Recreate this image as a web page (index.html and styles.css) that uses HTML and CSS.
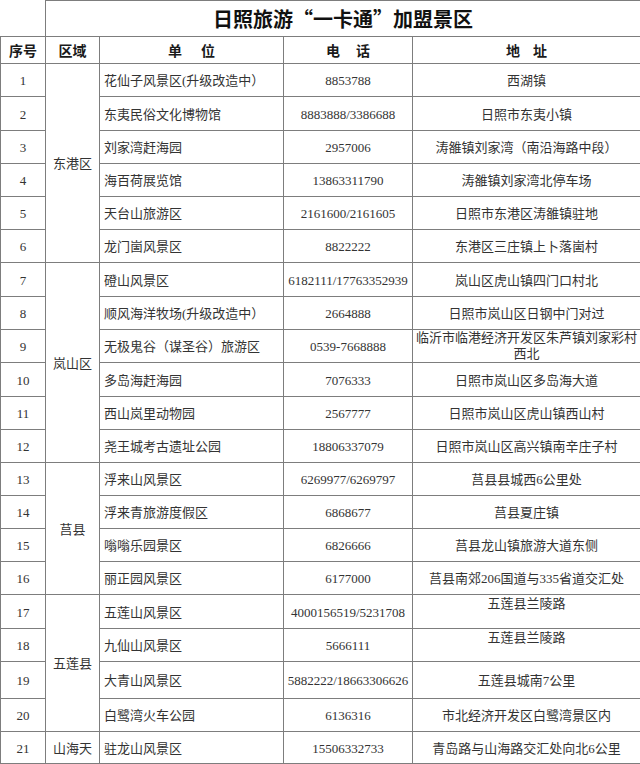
FILE: index.html
```html
<!DOCTYPE html>
<html lang="zh-CN">
<head>
<meta charset="utf-8">
<title>日照旅游“一卡通”加盟景区</title>
<link rel="stylesheet" href="styles.css">
</head>
<body>
<table class="sheet">
  <colgroup>
    <col class="c-no">
    <col class="c-area">
    <col class="c-name">
    <col class="c-tel">
    <col class="c-addr">
  </colgroup>
  <tr class="h36">
    <td class="blank"></td>
    <td class="title" colspan="4">日照旅游“一卡通”加盟景区</td>
  </tr>
  <tr class="h27 head">
    <td>序号</td>
    <td>区域</td>
    <td>单<span class="sp-a"></span>位</td>
    <td>电<span class="sp-b"></span>话</td>
    <td>地<span class="sp-c"></span>址</td>
  </tr>
  <tr class="h33">
    <td class="no">1</td>
    <td class="area" rowspan="6">东港区</td>
    <td class="name">花仙子风景区(升级改造中）</td>
    <td class="tel">8853788</td>
    <td class="addr">西湖镇</td>
  </tr>
  <tr class="h34">
    <td class="no">2</td>
    <td class="name">东夷民俗文化博物馆</td>
    <td class="tel">8883888/3386688</td>
    <td class="addr">日照市东夷小镇</td>
  </tr>
  <tr class="h33">
    <td class="no">3</td>
    <td class="name">刘家湾赶海园</td>
    <td class="tel">2957006</td>
    <td class="addr">涛雒镇刘家湾（南沿海路中段）</td>
  </tr>
  <tr class="h33">
    <td class="no">4</td>
    <td class="name">海百荷展览馆</td>
    <td class="tel">13863311790</td>
    <td class="addr">涛雒镇刘家湾北停车场</td>
  </tr>
  <tr class="h33">
    <td class="no">5</td>
    <td class="name">天台山旅游区</td>
    <td class="tel">2161600/2161605</td>
    <td class="addr">日照市东港区涛雒镇驻地</td>
  </tr>
  <tr class="h33">
    <td class="no">6</td>
    <td class="name">龙门崮风景区</td>
    <td class="tel">8822222</td>
    <td class="addr">东港区三庄镇上卜落崮村</td>
  </tr>
  <tr class="h34">
    <td class="no">7</td>
    <td class="area" rowspan="6">岚山区</td>
    <td class="name">磴山风景区</td>
    <td class="tel">6182111/17763352939</td>
    <td class="addr">岚山区虎山镇四门口村北</td>
  </tr>
  <tr class="h33">
    <td class="no">8</td>
    <td class="name">顺风海洋牧场(升级改造中）</td>
    <td class="tel">2664888</td>
    <td class="addr">日照市岚山区日钢中门对过</td>
  </tr>
  <tr class="h33">
    <td class="no">9</td>
    <td class="name">无极鬼谷（谋圣谷）旅游区</td>
    <td class="tel">0539-7668888</td>
    <td class="addr wrap">临沂市临港经济开发区朱芦镇刘家彩村西北</td>
  </tr>
  <tr class="h34">
    <td class="no">10</td>
    <td class="name">多岛海赶海园</td>
    <td class="tel">7076333</td>
    <td class="addr">日照市岚山区多岛海大道</td>
  </tr>
  <tr class="h33">
    <td class="no">11</td>
    <td class="name">西山岚里动物园</td>
    <td class="tel">2567777</td>
    <td class="addr">日照市岚山区虎山镇西山村</td>
  </tr>
  <tr class="h33">
    <td class="no">12</td>
    <td class="name">尧王城考古遗址公园</td>
    <td class="tel">18806337079</td>
    <td class="addr">日照市岚山区高兴镇南辛庄子村</td>
  </tr>
  <tr class="h33">
    <td class="no">13</td>
    <td class="area" rowspan="4">莒县</td>
    <td class="name">浮来山风景区</td>
    <td class="tel">6269977/6269797</td>
    <td class="addr">莒县县城西6公里处</td>
  </tr>
  <tr class="h33">
    <td class="no">14</td>
    <td class="name">浮来青旅游度假区</td>
    <td class="tel">6868677</td>
    <td class="addr">莒县夏庄镇</td>
  </tr>
  <tr class="h33">
    <td class="no">15</td>
    <td class="name">嗡嗡乐园景区</td>
    <td class="tel">6826666</td>
    <td class="addr">莒县龙山镇旅游大道东侧</td>
  </tr>
  <tr class="h33">
    <td class="no">16</td>
    <td class="name">丽正园风景区</td>
    <td class="tel">6177000</td>
    <td class="addr">莒县南郊206国道与335省道交汇处</td>
  </tr>
  <tr class="h34">
    <td class="no">17</td>
    <td class="area" rowspan="4">五莲县</td>
    <td class="name">五莲山风景区</td>
    <td class="tel">4000156519/5231708</td>
    <td class="addr top">五莲县兰陵路</td>
  </tr>
  <tr class="h33">
    <td class="no">18</td>
    <td class="name">九仙山风景区</td>
    <td class="tel">5666111</td>
    <td class="addr top">五莲县兰陵路</td>
  </tr>
  <tr class="h37">
    <td class="no">19</td>
    <td class="name">大青山风景区</td>
    <td class="tel">5882222/18663306626</td>
    <td class="addr">五莲县城南7公里</td>
  </tr>
  <tr class="h33">
    <td class="no">20</td>
    <td class="name">白鹭湾火车公园</td>
    <td class="tel">6136316</td>
    <td class="addr">市北经济开发区白鹭湾景区内</td>
  </tr>
  <tr class="h32">
    <td class="no">21</td>
    <td class="area">山海天</td>
    <td class="name">驻龙山风景区</td>
    <td class="tel">15506332733</td>
    <td class="addr">青岛路与山海路交汇处向北6公里</td>
  </tr>
</table>
</body>
</html>
```

FILE: styles.css
```css
html, body {
  margin: 0;
  padding: 0;
  background: #ffffff;
}

.sheet {
  border-collapse: collapse;
  table-layout: fixed;
  width: 640px;
  font-family: "Liberation Serif", "Noto Sans CJK SC", serif;
  font-size: 13px;
  color: #333333;
}

.c-no { width: 45px; }
.c-area { width: 54px; }
.c-name { width: 184px; }
.c-tel { width: 129px; }
.c-addr { width: 228px; }

.sheet td {
  border: 1px solid #7d7d7d;
  padding: 2px 2px 0;
  text-align: center;
  vertical-align: middle;
  line-height: 16px;
  overflow: hidden;
  white-space: nowrap;
}

.sheet td.blank {
  border: none;
}

.sheet td.title {
  font-family: "Noto Sans CJK SC", sans-serif;
  font-weight: bold;
  font-size: 20px;
  color: #111111;
  padding: 0;
}

.head td {
  font-family: "Noto Sans CJK SC", sans-serif;
  font-weight: bold;
  font-size: 14px;
  color: #1a1a1a;
  padding-top: 0;
}

.sp-a, .sp-b, .sp-c {
  display: inline-block;
}
.sp-a { width: 19px; }
.sp-b { width: 16px; }
.sp-c { width: 13px; }

.sheet td.name {
  text-align: left;
  padding-left: 4px;
}

.sheet td.wrap {
  white-space: normal;
  line-height: 16px;
  padding-top: 0;
}

.sheet td.top {
  vertical-align: top;
  padding-top: 1px;
}

.h36 { height: 36px; }
.h27 { height: 27px; }
.h32 { height: 32px; }
.h33 { height: 33px; }
.h34 { height: 34px; }
.h37 { height: 37px; }
```
